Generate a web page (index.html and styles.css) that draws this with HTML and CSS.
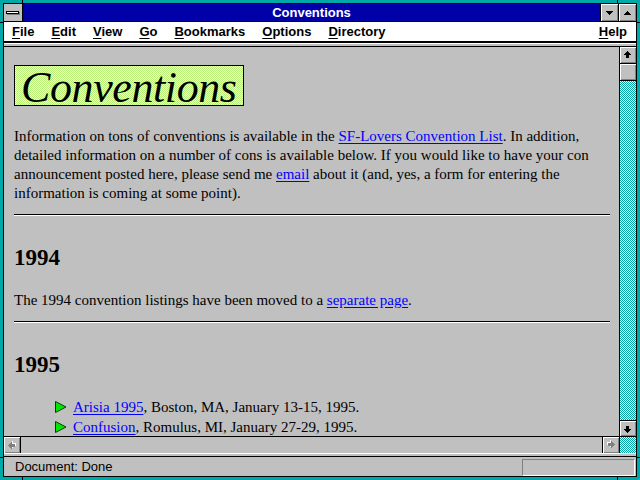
FILE: index.html
```html
<!DOCTYPE html>
<html>
<head>
<meta charset="utf-8">
<title>Conventions</title>
<link rel="stylesheet" href="styles.css">
</head>
<body>
<div class="window">
  <span class="mark mark-tl"></span><span class="mark mark-tr"></span>
  <span class="mark mark-bl"></span><span class="mark mark-br"></span>
  <span class="mark mark-lt"></span><span class="mark mark-rt"></span>
  <span class="mark mark-lb"></span><span class="mark mark-rb"></span>
  <div class="inner">
    <div class="titlebar">
      <div class="sysmenu"><span class="sysbar"></span></div>
      <div class="title">Conventions</div>
      <div class="tbtn">
        <svg width="17" height="17" viewBox="0 0 17 17"><path d="M5 7h7v1h-1v1h-1v1h-1v1h-1v-1h-1v-1h-1v-1h-1z" fill="#000"/></svg>
      </div>
      <div class="tbtn">
        <svg width="17" height="17" viewBox="0 0 17 17"><path d="M5 11h7v-1h-1v-1h-1v-1h-1v-1h-1v1h-1v1h-1v1h-1z" fill="#000"/></svg>
      </div>
    </div>
    <div class="menubar">
      <span class="mi"><u>F</u>ile</span>
      <span class="mi"><u>E</u>dit</span>
      <span class="mi"><u>V</u>iew</span>
      <span class="mi"><u>G</u>o</span>
      <span class="mi"><u>B</u>ookmarks</span>
      <span class="mi"><u>O</u>ptions</span>
      <span class="mi"><u>D</u>irectory</span>
      <span class="mi help"><u>H</u>elp</span>
    </div>
    <div class="sep-top"></div>
    <div class="main">
      <div class="page">
        <div class="logo">Conventions</div>
        <p class="intro">Information on tons of conventions is available in the <a href="#">SF-Lovers Convention List</a>. In addition, detailed information on a number of cons is available below. If you would like to have your con announcement posted here, please send me <a href="#">email</a> about it (and, yes, a form for entering the information is coming at some point).</p>
        <hr class="rule">
        <h2 class="year">1994</h2>
        <p class="moved">The 1994 convention listings have been moved to a <a href="#">separate page</a>.</p>
        <hr class="rule">
        <h2 class="year">1995</h2>
        <ul class="cons">
          <li><svg class="bullet" width="12" height="12" viewBox="0 0 12 12"><path d="M0.5 0.5L11 6L0.5 11.5z" fill="#00e800" stroke="#004000" stroke-width="1"/></svg><span><a href="#">Arisia 1995</a>, Boston, MA, January 13-15, 1995.</span></li>
          <li><svg class="bullet" width="12" height="12" viewBox="0 0 12 12"><path d="M0.5 0.5L11 6L0.5 11.5z" fill="#00e800" stroke="#004000" stroke-width="1"/></svg><span><a href="#">Confusion</a>, Romulus, MI, January 27-29, 1995.</span></li>
        </ul>
      </div>
      <div class="vscroll">
        <div class="sbtn">
          <svg width="16" height="16" viewBox="0 0 16 16"><path d="M7 4h1v1h1v1h1v1h1v1h-2v3h-3v-3h-2v-1h1v-1h1v-1h1z" fill="#000"/></svg>
        </div>
        <div class="sbtn"></div>
        <div class="track"></div>
        <div class="sbtn sbtn-down">
          <svg class="flipv" width="16" height="16" viewBox="0 0 16 16"><path d="M7 4h1v1h1v1h1v1h1v1h-2v3h-3v-3h-2v-1h1v-1h1v-1h1z" fill="#000"/></svg>
        </div>
      </div>
    </div>
    <div class="hscroll">
      <div class="sbtn hleft">
        <svg class="rotl" width="16" height="16" viewBox="0 0 16 16"><path d="M8 5h1v1h1v1h1v1h1v1h-2v3h-3v-3h-2v-1h1v-1h1v-1h1z" fill="#fff"/><path d="M7 4h1v1h1v1h1v1h1v1h-2v3h-3v-3h-2v-1h1v-1h1v-1h1z" fill="#808080"/></svg>
      </div>
      <div class="htrack"></div>
      <div class="sbtn hright">
        <svg class="rotr" width="16" height="16" viewBox="0 0 16 16"><path d="M6 5h1v1h1v1h1v1h1v1h-2v3h-3v-3h-2v-1h1v-1h1v-1h1z" fill="#fff"/><path d="M7 4h1v1h1v1h1v1h1v1h-2v3h-3v-3h-2v-1h1v-1h1v-1h1z" fill="#808080"/></svg>
      </div>
      <div class="corner"></div>
    </div>
    <div class="sep-bottom"></div>
    <div class="status">
      <span class="status-text">Document: Done</span>
      <span class="status-box"></span>
    </div>
  </div>
</div>
</body>
</html>
```
FILE: styles.css
```css
html, body {
  margin: 0;
  padding: 0;
  background: #00a8a8;
}

.window {
  position: relative;
  width: 640px;
  height: 480px;
  box-sizing: border-box;
  padding: 3px;
  background: #00a8a8;
  overflow: hidden;
}

.mark {
  position: absolute;
  background: #000;
}
.mark-tl { left: 22px; top: 0; width: 1px; height: 3px; }
.mark-tr { left: 617px; top: 0; width: 1px; height: 3px; }
.mark-bl { left: 22px; bottom: 0; width: 1px; height: 3px; }
.mark-br { left: 617px; bottom: 0; width: 1px; height: 3px; }
.mark-lt { left: 0; top: 22px; width: 3px; height: 1px; }
.mark-rt { right: 0; top: 22px; width: 3px; height: 1px; }
.mark-lb { left: 0; top: 457px; width: 3px; height: 1px; }
.mark-rb { right: 0; top: 457px; width: 3px; height: 1px; }

.inner {
  height: 100%;
  box-sizing: border-box;
  border: 1px solid #000;
  background: #c0c0c0;
  display: flex;
  flex-direction: column;
}

/* Title bar */
.titlebar {
  height: 17px;
  border-bottom: 1px solid #000;
  display: flex;
  background: #0000a8;
}
.sysmenu {
  width: 18px;
  border-right: 1px solid #000;
  background: #c0c0c0;
  display: flex;
  align-items: center;
  justify-content: center;
}
.sysbar {
  width: 11px;
  height: 1px;
  border: 1px solid #000;
  background: #fff;
  box-shadow: 1px 1px 0 #808080;
  margin-left: -1px;
}
.title {
  flex: 1;
  text-align: center;
  color: #fff;
  font: bold 13px/17px "Liberation Sans", Arial, sans-serif;
}
.tbtn {
  width: 17px;
  height: 17px;
  border-left: 1px solid #000;
  background: #c0c0c0;
  box-shadow: inset 1px 1px 0 #fff, inset -1px -1px 0 #808080;
}
.tbtn svg { display: block; }

/* Menu bar */
.menubar {
  height: 19px;
  background: #fff;
  display: flex;
  font: bold 13px/19px "Liberation Sans", Arial, sans-serif;
  color: #000;
}
.mi {
  padding: 0 8.5px;
}
.mi:first-child {
  padding-left: 8px;
}
.mi u {
  text-decoration-thickness: 1px;
  text-underline-offset: 2px;
}
.help {
  margin-left: auto;
  padding-right: 9px;
}

.sep-top {
  height: 3px;
  border-top: 2px solid #000;
  border-bottom: 1px solid #000;
  background: linear-gradient(#fff 0 1px, #c0c0c0 1px);
}

/* Main area */
.main {
  height: 389px;
  display: flex;
}
.page {
  flex: 1;
  overflow: hidden;
  padding: 18px 9px 0 10px;
  font-family: "Liberation Serif", "Times New Roman", serif;
  font-size: 15px;
  color: #000;
}
.page a {
  color: #0000ff;
  text-decoration: underline;
  text-underline-offset: 2px;
}

.logo {
  width: 230px;
  height: 41px;
  box-sizing: border-box;
  border: 1px solid #000;
  padding: 3px 0 0 6px;
  background: repeating-conic-gradient(#b8f078 0 25%, #f4ffe8 0 50%) 0 0 / 2px 2px;
  font: italic 44px/37px "Liberation Serif", "Times New Roman", serif;
  letter-spacing: -0.4px;
  color: #000;
  white-space: nowrap;
}

.intro {
  margin: 21px 0 0;
  line-height: 19px;
}
.rule {
  margin: 11px 0 0;
  height: 0;
  border: 0;
  border-top: 1px solid #000;
  border-bottom: 1px solid #fff;
}
.year {
  margin: 28px 0 0;
  font-size: 23px;
  line-height: 28px;
  font-weight: bold;
}
.moved {
  margin: 19px 0 0;
  line-height: 19px;
}
.cons {
  list-style: none;
  margin: 18px 0 0;
  padding: 0 0 0 41px;
}
.cons li {
  display: flex;
  align-items: flex-start;
  line-height: 20px;
}
.bullet {
  flex: none;
  margin: 4px 6px 0 0;
}

/* Scrollbars */
.vscroll {
  width: 16px;
  border-left: 1px solid #000;
  display: flex;
  flex-direction: column;
}
.sbtn {
  flex: none;
  width: 16px;
  height: 16px;
  background: #c0c0c0;
  box-shadow: inset 1px 1px 0 #fff, inset -1px -1px 0 #808080;
  border-bottom: 1px solid #000;
}
.sbtn svg { display: block; }
.sbtn-down {
  border-bottom: 0;
  border-top: 1px solid #000;
  height: 15px;
}
.track {
  flex: 1;
  background: repeating-conic-gradient(#00a8a8 0 25%, #fff 0 50%) 0 0 / 2px 2px;
}
.flipv { transform: scaleY(-1); }
.rotl { transform: rotate(-90deg); }
.rotr { transform: rotate(90deg); }

.hscroll {
  height: 16px;
  border-top: 1px solid #000;
  display: flex;
}
.hscroll .sbtn {
  border-bottom: 0;
}
.hleft {
  border-right: 1px solid #000;
}
.htrack {
  flex: 1;
  background: #c0c0c0;
}
.hright {
  border-left: 1px solid #000;
}
.corner {
  width: 16px;
  border-left: 1px solid #000;
  background: repeating-conic-gradient(#00a8a8 0 25%, #fff 0 50%) 0 0 / 2px 2px;
}

.sep-bottom {
  height: 3px;
  border-bottom: 1px solid #000;
  background: linear-gradient(#fff 0 1px, #c0c0c0 1px);
}

/* Status bar */
.status {
  flex: 1;
  display: flex;
  align-items: flex-start;
  font: 13px/19px "Liberation Sans", Arial, sans-serif;
  color: #000;
}
.status-text {
  padding-left: 11px;
}
.status-box {
  margin: 2px 1px 0 auto;
  width: 113px;
  height: 17px;
  box-sizing: border-box;
  border-top: 1px solid #808080;
  border-left: 1px solid #808080;
  border-right: 1px solid #fff;
  border-bottom: 1px solid #fff;
}
```
